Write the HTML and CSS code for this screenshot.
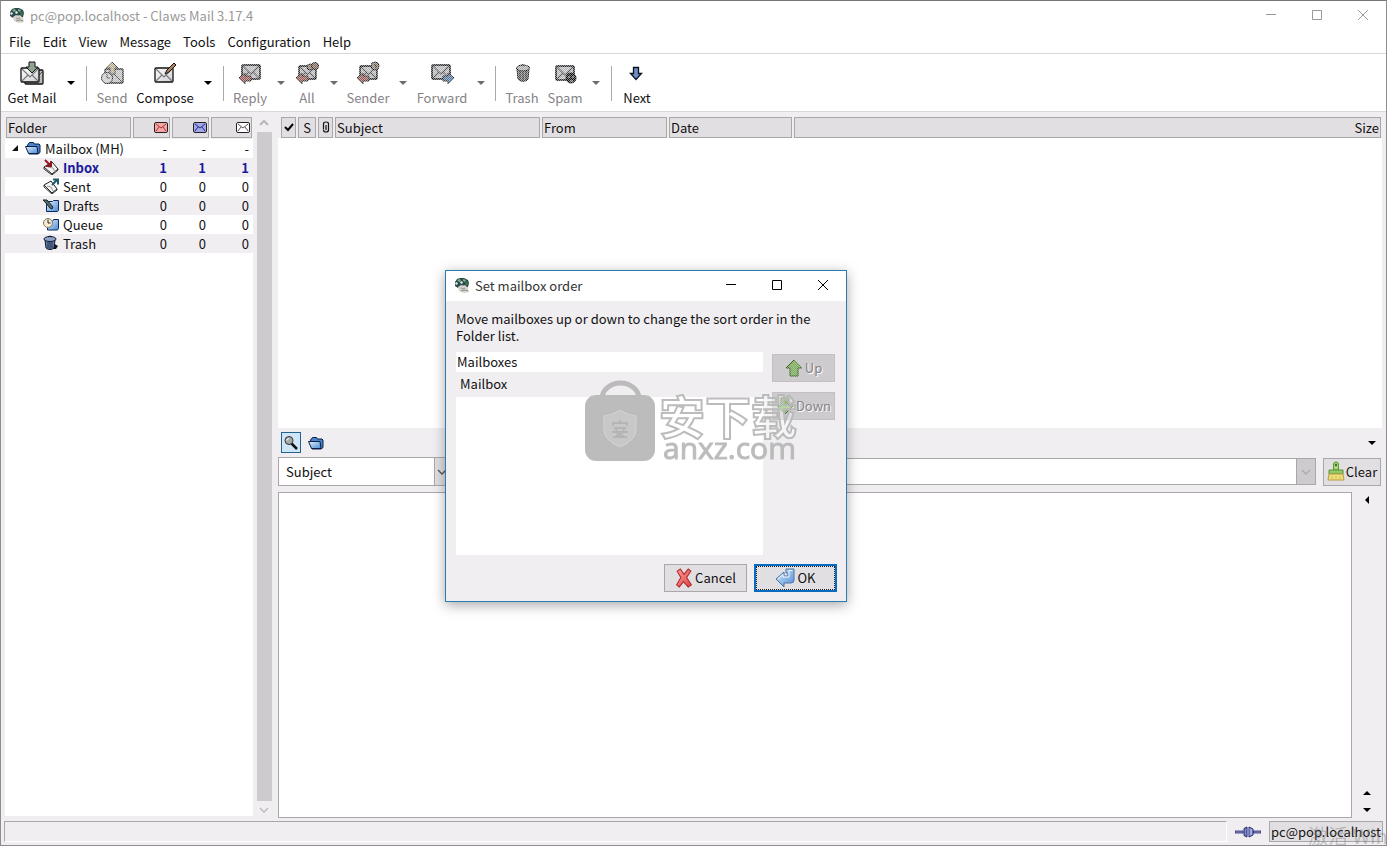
FILE: index.html
```html
<!DOCTYPE html>
<html lang="en">
<head>
<meta charset="utf-8">
<title>pc@pop.localhost - Claws Mail 3.17.4</title>
<link rel="stylesheet" href="styles.css">
</head>
<body>
<svg class="defs" aria-hidden="true">
  <defs>
    <linearGradient id="gBlue" x1="0" y1="0" x2="1" y2="1"><stop offset="0" stop-color="#e2f0fc"/><stop offset="1" stop-color="#4a8ad6"/></linearGradient>
    <linearGradient id="gPaper" x1="0" y1="0" x2="1" y2="1"><stop offset="0" stop-color="#fff"/><stop offset="1" stop-color="#cfcfd6"/></linearGradient>
    <linearGradient id="gRed" x1="0" y1="0" x2="1" y2="1"><stop offset="0" stop-color="#ff9a94"/><stop offset="1" stop-color="#e0454a"/></linearGradient>
  </defs>
  <symbol id="logo" viewBox="0 0 16 16">
    <path d="M1 5l2-3 3-1h4l4 2 1 3-1 4-3 1-2-3-2 2-3 1-3-2z" fill="#2b4a4c"/>
    <path d="M3 3l3-1 1 2-2 1zM9 2l3 1-1 2-2-1z" fill="#7fae8c"/>
    <path d="M1 6l2-1 1 2-2 1zM6 5l2-1 1 2-2 1z" fill="#dfeee6"/>
    <path d="M12 4l2 2-1 3-2-3z" fill="#3f7a46"/>
    <path d="M4 10l3-2 2 1 2-1 3 3 1 4-5 1-5-2z" fill="#d5d3cc"/>
    <path d="M7 11l2 1 2-1M7 14l4-1 3 1" stroke="#8e8f88" fill="none"/>
  </symbol>
  <symbol id="env" viewBox="0 0 20 16">
    <rect x="1" y="1" width="18" height="14" rx="1" fill="url(#gPaper)" stroke="#111" stroke-width="1.3"/>
    <path d="M2 2l8 8 8-8M2 14l6-6M18 14l-6-6" fill="none" stroke="#777" stroke-width="1.1"/>
  </symbol>
  <symbol id="getmail" viewBox="0 0 24 24">
    <rect x="5" y="9" width="18" height="14" rx="1" fill="#bdbdb8" stroke="#111" stroke-width="1.3"/>
    <path d="M13 20l9-9" stroke="#555"/>
    <use href="#env" x="0" y="6" width="20" height="16"/>
    <path d="M9 1h6v5h3l-6 6-6-6h3z" fill="#8fa392" stroke="#111"/>
  </symbol>
  <symbol id="send" viewBox="0 0 24 24">
    <rect x="5" y="8" width="18" height="14" rx="1" fill="#bbb" stroke="#222" stroke-width="1.3"/>
    <path d="M6 21l8-8 8 8" stroke="#555" fill="none"/>
    <circle cx="7" cy="17" r="5.500" fill="#ccc" stroke="#222"/>
    <path d="M7 13v4h3" stroke="#444" fill="none"/>
    <path d="M12 1l6 6h-3v6h-5V7H6z" fill="#b8a98c" stroke="#444"/>
  </symbol>
  <symbol id="compose" viewBox="0 0 24 24">
    <use href="#env" x="1" y="6" width="20" height="16"/>
    <path d="M12 13l2-4 7-7 2 2-7 7z" fill="#b5835a" stroke="#111"/>
  </symbol>
  <symbol id="graymail" viewBox="0 0 20 16">
    <rect x="1" y="1" width="18" height="14" rx="1" fill="#b5b3b8" stroke="#000" stroke-width="1.5"/>
    <path d="M2 2l8 8 8-8M2 14l6-6M18 14l-6-6" fill="none" stroke="#555" stroke-width="1.3"/>
  </symbol>
  <symbol id="reply" viewBox="0 0 24 24">
    <use href="#graymail" x="3" y="3" width="20" height="16"/>
    <path d="M1 17l6-5v3h6v5H7v3z" fill="#94544f" stroke="#222"/>
  </symbol>
  <symbol id="replyall" viewBox="0 0 24 24">
    <use href="#graymail" x="3" y="4" width="19" height="15"/>
    <circle cx="15" cy="6" r="3" fill="#8c7b68" stroke="#111"/><circle cx="20" cy="5" r="3.500" fill="#7f655c" stroke="#111"/>
    <path d="M1 17l6-5v3h6v5H7v3z" fill="#94544f" stroke="#222"/>
  </symbol>
  <symbol id="sender" viewBox="0 0 24 24">
    <use href="#graymail" x="3" y="4" width="19" height="15"/>
    <circle cx="19" cy="5" r="4" fill="#8c7f6e" stroke="#111"/><path d="M18 4h2v3" stroke="#222" fill="none"/>
    <path d="M1 17l6-5v3h6v5H7v3z" fill="#94544f" stroke="#222"/>
  </symbol>
  <symbol id="forward" viewBox="0 0 24 24">
    <use href="#graymail" x="1" y="3" width="20" height="16"/>
    <path d="M24 17l-6-5v3h-5v5h5v3z" fill="#4f739f" stroke="#222"/>
  </symbol>
  <symbol id="bin" viewBox="0 0 24 24">
    <path d="M7 8l1 10c2 3 8 3 10 0l1-10z" fill="#777" stroke="#111"/>
    <path d="M10 10v9M13 11v9M16 10v9" stroke="#222"/>
    <ellipse cx="13" cy="7" rx="6.500" ry="3" fill="#aaa" stroke="#111"/><path d="M11 5q2-3 4 0" stroke="#222" fill="none"/>
  </symbol>
  <symbol id="spam" viewBox="0 0 24 24">
    <use href="#graymail" x="2" y="4" width="20" height="16"/>
    <circle cx="18" cy="17" r="5" fill="#111" stroke="#000"/><path d="M15 16h2M19 16h2M17 20h3" stroke="#bbb"/>
  </symbol>
  <symbol id="next" viewBox="0 0 24 24">
    <path d="M8.500 6.500h5v6h3l-5.500 6-5.500-6h3z" fill="#6d8fc4" stroke="#0a1020" stroke-width="1.300"/>
  </symbol>
  <symbol id="folder" viewBox="0 0 16 14">
    <path d="M2.500 4l2-2.500h4l1 1.500h4.500l1 1v7.500l-2 1.500h-9z" fill="#4a83cc" stroke="#0b1f45"/>
    <path d="M.500 5.500h11.500l1 7H3.500z" fill="url(#gBlue)" stroke="#0b1f45"/>
  </symbol>
  <symbol id="inbox" viewBox="0 0 16 16">
    <path d="M1 8l8-5 6 7-6 5z" fill="#f3f3f3" stroke="#222"/><path d="M1 8v2l8 6 6-5v-1" fill="none" stroke="#333"/>
    <path d="M5 8l5 1 2 4" stroke="#999" fill="none"/>
    <path d="M2 1l5 5M8 2v5H3" stroke="#8f1820" stroke-width="2" fill="none"/>
  </symbol>
  <symbol id="sent" viewBox="0 0 16 16">
    <path d="M1 7l7-4 6 8-5 4z" fill="#f3f3f3" stroke="#222"/><path d="M1 7v2l8 7 5-4v-1" fill="none" stroke="#333"/>
    <path d="M4 8l4 1 2 4" stroke="#999" fill="none"/>
    <path d="M9 7l5-5M10 1.500h5v5" stroke="#1d5a6b" stroke-width="2" fill="none"/>
  </symbol>
  <symbol id="drafts" viewBox="0 0 16 16">
    <path d="M3.500 4.500h6l1-1h5v10l-1 1h-11z" fill="url(#gBlue)" stroke="#0b2b60"/>
    <path d="M0 3l4 0 6 7-1 2-2-1-5-6z" fill="#59696d" stroke="#17262b"/>
  </symbol>
  <symbol id="queue" viewBox="0 0 16 16">
    <path d="M4.500 5.500h5l1-2h5v9l-1 1.500h-10z" fill="url(#gBlue)" stroke="#0b2b60"/>
    <circle cx="5" cy="7" r="4.500" fill="#f4ecd6" stroke="#8a7557"/><path d="M5 3.500V7h2.500" stroke="#222" fill="none"/>
  </symbol>
  <symbol id="trash" viewBox="0 0 16 16">
    <path d="M10 8l5 3-2 3-5 0z" fill="#111"/>
    <path d="M2 5l1 8c2 2 6 2 8 0l1-8z" fill="#6b80a8" stroke="#101a30"/>
    <path d="M5 7v6M7 7v7M9 7v6" stroke="#1c2c50"/>
    <ellipse cx="7" cy="4" rx="6" ry="2.500" fill="#8fa3c6" stroke="#101a30"/><path d="M5 2q2-2 4 0" stroke="#101a30" fill="none"/>
  </symbol>
  <symbol id="minienv" viewBox="0 0 14 11">
    <rect x=".5" y=".5" width="13" height="10" rx="1.500" fill="currentColor" stroke="#222"/>
    <path d="M2 2l5 4 5-4M2 9l3-4M12 9L9 5" fill="none" stroke="var(--flap)"/>
  </symbol>
  <symbol id="lens" viewBox="0 0 16 16">
    <path d="M8 8l6 6" stroke="#111" stroke-width="2.500"/><circle cx="6" cy="5.500" r="4" fill="#a8aca6" stroke="#333"/>
    <path d="M4 5.500q0-2 2-2" stroke="#fff" fill="none"/>
  </symbol>
  <symbol id="brush" viewBox="0 0 18 20">
    <path d="M6.500 9V3q0-2 2.500-2t2.500 2v6z" fill="#a5d67a" stroke="#5d9a3a"/><circle cx="9" cy="4" r="1.200" fill="#3f7324"/>
    <path d="M2 9h14v4H2z" fill="#93c968" stroke="#5b9438"/>
    <path d="M2 13h14l1 6H1z" fill="#efe07c" stroke="#b59c45"/><path d="M5 15v3M9 15v3M13 15v3" stroke="#d3bb58"/>
  </symbol>
  <symbol id="arrowup" viewBox="0 0 18 18">
    <path d="M9 1l8 8h-4v8H5V9H1z" fill="#7db356" stroke="#2f5a1c"/>
  </symbol>
  <symbol id="arrowdown" viewBox="0 0 18 18">
    <path d="M9 17l8-8h-4V1H5v8H1z" fill="#7db356" stroke="#2f5a1c"/>
  </symbol>
  <symbol id="cross" viewBox="0 0 16 19">
    <path d="M1.500 3l3-2 3.500 5 4-5 2.500 2-4 6 4.500 7-3 2-4.500-5-4 5-2.500-2 4-7z" fill="url(#gRed)" stroke="#b02a2c"/>
  </symbol>
  <symbol id="enter" viewBox="0 0 20 20">
    <path d="M1 11l8-7v4h4V5h-2V1h8v11q0 3-3 3H9v4z" fill="url(#gBlue)" stroke="#4a74a8"/>
    <path d="M3 11l5-4.500V9h6V2.500h3.500" fill="none" stroke="#f2f8fe"/>
  </symbol>
  <symbol id="plug" viewBox="0 0 26 12">
    <path d="M0 5h8v2H0zM18 5h8v2h-8z" fill="#8b90cc" stroke="#23286b" stroke-width=".8"/>
    <path d="M9 2.500l3-1.500v10l-3-1.500z" fill="#8088e0" stroke="#1e2466"/><path d="M14 1l4 2v6l-4 2z" fill="#a3aaf0" stroke="#1e2466"/>
  </symbol>
  <symbol id="clip" viewBox="0 0 8 12">
    <path d="M1.500 8.500V3q0-2 2.500-2t2.500 2v6q0 2-2.500 2T1.500 9M4 4v5" fill="none" stroke="#111" stroke-width="1.200"/>
  </symbol>
  <symbol id="tick" viewBox="0 0 10 10"><path d="M1 5l3 3 5-6" fill="none" stroke="#000" stroke-width="2"/></symbol>
  <symbol id="min" viewBox="0 0 12 12"><path d="M1 5.500h10" stroke="currentColor"/></symbol>
  <symbol id="max" viewBox="0 0 12 12"><path d="M1.500 1.500h9v9h-9z" fill="none" stroke="currentColor"/></symbol>
  <symbol id="close" viewBox="0 0 12 12"><path d="M1 1l10 10M11 1L1 11" stroke="currentColor"/></symbol>
  <symbol id="chevdown" viewBox="0 0 10 8"><path d="M1 2l4 4 4-4" fill="none" stroke="currentColor" stroke-width="1.300"/></symbol>
  <symbol id="chevup" viewBox="0 0 10 8"><path d="M1 6l4-4 4 4" fill="none" stroke="currentColor" stroke-width="2"/></symbol>
</svg>

<div class="window">
  <header class="titlebar">
    <svg class="i16"><use href="#logo"/></svg>
    <span class="caption">pc@pop.localhost - Claws Mail 3.17.4</span>
    <div class="winbtns">
      <button aria-label="Minimize"><svg><use href="#min"/></svg></button>
      <button aria-label="Maximize"><svg><use href="#max"/></svg></button>
      <button aria-label="Close"><svg><use href="#close"/></svg></button>
    </div>
  </header>
  <nav class="menubar">
    <button>File</button><button>Edit</button><button>View</button><button>Message</button><button>Tools</button><button>Configuration</button><button>Help</button>
  </nav>
  <div class="toolbar">
    <button class="tool"><svg><use href="#getmail"/></svg>Get Mail</button>
    <button class="drop" aria-label="Get Mail options"></button>
    <i class="sep"></i>
    <button class="tool" disabled><svg><use href="#send"/></svg>Send</button>
    <button class="tool"><svg><use href="#compose"/></svg>Compose</button>
    <button class="drop" aria-label="Compose options"></button>
    <i class="sep"></i>
    <button class="tool" disabled><svg><use href="#reply"/></svg>Reply</button>
    <button class="drop" disabled aria-label="Reply options"></button>
    <button class="tool" disabled><svg><use href="#replyall"/></svg>All</button>
    <button class="drop" disabled aria-label="All options"></button>
    <button class="tool" disabled><svg><use href="#sender"/></svg>Sender</button>
    <button class="drop" disabled aria-label="Sender options"></button>
    <button class="tool" disabled><svg><use href="#forward"/></svg>Forward</button>
    <button class="drop" disabled aria-label="Forward options"></button>
    <i class="sep"></i>
    <button class="tool" disabled><svg><use href="#bin"/></svg>Trash</button>
    <button class="tool" disabled><svg><use href="#spam"/></svg>Spam</button>
    <button class="drop" disabled aria-label="Spam options"></button>
    <i class="sep"></i>
    <button class="tool"><svg><use href="#next"/></svg>Next</button>
  </div>

  <main class="main">
    <aside class="folders">
      <div class="tree">
        <table class="grid">
          <colgroup><col><col class="c-num"><col class="c-num"><col class="c-last"></colgroup>
          <thead><tr>
            <th><div class="hd">Folder</div></th>
            <th><div class="hd end"><svg class="mini new"><use href="#minienv"/></svg></div></th>
            <th><div class="hd end"><svg class="mini unread"><use href="#minienv"/></svg></div></th>
            <th><div class="hd end"><svg class="mini total"><use href="#minienv"/></svg></div></th>
          </tr></thead>
          <tbody>
            <tr><td><div class="name root"><i class="expander"></i><svg class="i16"><use href="#folder"/></svg>Mailbox (MH)</div></td><td>-</td><td>-</td><td>-</td></tr>
            <tr class="unreadrow"><td><div class="name"><svg class="i16"><use href="#inbox"/></svg>Inbox</div></td><td>1</td><td>1</td><td>1</td></tr>
            <tr><td><div class="name"><svg class="i16"><use href="#sent"/></svg>Sent</div></td><td>0</td><td>0</td><td>0</td></tr>
            <tr><td><div class="name"><svg class="i16"><use href="#drafts"/></svg>Drafts</div></td><td>0</td><td>0</td><td>0</td></tr>
            <tr><td><div class="name"><svg class="i16"><use href="#queue"/></svg>Queue</div></td><td>0</td><td>0</td><td>0</td></tr>
            <tr><td><div class="name"><svg class="i16"><use href="#trash"/></svg>Trash</div></td><td>0</td><td>0</td><td>0</td></tr>
          </tbody>
        </table>
      </div>
      <div class="scroll">
        <svg><use href="#chevup"/></svg><div class="thumb"></div><svg><use href="#chevdown"/></svg>
      </div>
    </aside>

    <section class="content">
      <div class="msglist">
        <table class="grid">
          <colgroup><col class="m-mark"><col class="m-s"><col class="m-clip"><col class="m-subject"><col class="m-from"><col class="m-date"><col></colgroup>
          <thead><tr>
            <th><div class="hd mid"><svg class="tick"><use href="#tick"/></svg></div></th>
            <th><div class="hd mid">S</div></th>
            <th><div class="hd mid"><svg class="clip"><use href="#clip"/></svg></div></th>
            <th><div class="hd">Subject</div></th>
            <th><div class="hd">From</div></th>
            <th><div class="hd">Date</div></th>
            <th><div class="hd end">Size</div></th>
          </tr></thead>
        </table>
      </div>
      <div class="quick">
        <button class="toggle on" aria-label="Quick search"><svg class="i16"><use href="#lens"/></svg></button>
        <button class="toggle" aria-label="Folder"><svg class="i16"><use href="#folder"/></svg></button>
        <i class="tri down"></i>
      </div>
      <div class="search">
        <div class="combo kind"><select aria-label="Search in"><option>Subject</option></select><span class="arrow"><svg><use href="#chevdown"/></svg></span></div>
        <div class="combo term"><input type="text" aria-label="Search text"><button class="arrow off" disabled aria-label="Search history"><svg><use href="#chevdown"/></svg></button></div>
        <button class="btn clear"><svg><use href="#brush"/></svg>Clear</button>
      </div>
      <div class="message">
        <div class="view"></div>
        <div class="side"><i class="tri left"></i><i class="tri up"></i><i class="tri down"></i></div>
      </div>
    </section>
  </main>

  <footer class="status">
    <div class="log"></div>
    <svg class="plug"><use href="#plug"/></svg>
    <button class="account">pc@pop.localhost</button>
    <span class="activate" lang="zh">激活 Win</span>
  </footer>
</div>

<div class="dialog" role="dialog" aria-labelledby="dlgtitle">
  <header class="dlgbar">
    <svg class="i16"><use href="#logo"/></svg>
    <span class="caption" id="dlgtitle">Set mailbox order</span>
    <div class="winbtns">
      <button aria-label="Minimize"><svg><use href="#min"/></svg></button>
      <button aria-label="Maximize"><svg><use href="#max"/></svg></button>
      <button aria-label="Close"><svg><use href="#close"/></svg></button>
    </div>
  </header>
  <div class="dlgbody">
    <p>Move mailboxes up or down to change the sort order in the Folder list.</p>
    <div class="order">
      <div class="boxes">
        <div class="group">Mailboxes</div>
        <div class="colname">Mailbox</div>
        <div class="list"></div>
      </div>
      <div class="updown">
        <button class="btn" disabled><svg><use href="#arrowup"/></svg>Up</button>
        <button class="btn" disabled><svg><use href="#arrowdown"/></svg>Down</button>
      </div>
    </div>
    <div class="actions">
      <button class="btn"><svg><use href="#cross"/></svg>Cancel</button>
      <button class="btn default"><svg><use href="#enter"/></svg>OK</button>
    </div>
  </div>
  <div class="mark">
    <svg class="bag" viewBox="0 0 70 80">
      <path d="M17 17a18.500 16 0 0 1 37 0" fill="none" stroke="#b9b9b9" stroke-width="5"/>
      <rect x="0" y="13" width="70" height="66" rx="11" fill="#b9b9b9"/>
      <path d="M35 28q7 5 16 6v14q0 10-16 17-16-7-16-17V34q9-1 16-6z" fill="#c6c6c6" stroke="#d2d2d2"/>
      <path d="M35 38v3M28 44v-3h14v3M29 46h12M27 50h16M31 46q0 8 8 8M39 46q0 6-8 8M28 55h14" fill="none" stroke="#b2b2b2" stroke-width="2"/>
    </svg>
    <div class="words"><span class="zh" lang="zh">安下载</span><span class="url">anxz.com</span></div>
  </div>
</div>
</body>
</html>
```

FILE: styles.css
```css
:root {
  --bg: #f0eef1;
  --head: #e2dfe3;
  --line: #a9a7aa;
}
* { box-sizing: border-box; }
body {
  margin: 0;
  font: 13px/17px "Noto Sans CJK SC", "Noto Sans", sans-serif;
  color: #111;
  position: relative;
}
button, input, select {
  font: inherit;
  color: inherit;
  margin: 0;
  padding: 0;
  border: 0;
  background: none;
  border-radius: 0;
}
svg { display: block; flex: none; }
.defs { position: absolute; width: 0; height: 0; }
.i16 { width: 16px; height: 16px; }

.window {
  height: 100vh;
  display: flex;
  flex-direction: column;
  background: var(--bg);
  border: 1px solid #8e8c8f;
  border-top-color: #77757a;
}
.titlebar {
  flex: none;
  display: flex;
  align-items: center;
  height: 29px;
  padding: 0 0 1px 8px;
  gap: 5px;
  background: #fff;
  color: #999;
}
.caption { flex: 1; }
.winbtns { display: flex; }
.winbtns button {
  width: 46px;
  height: 28px;
  display: grid;
  place-items: center;
}
.winbtns svg { width: 12px; height: 12px; }
.menubar {
  flex: none;
  display: flex;
  height: 24px;
  padding-left: 8px;
  gap: 12px;
  background: #fff;
  border-bottom: 1px solid #d9d7da;
}
.toolbar {
  flex: none;
  display: grid;
  grid-template-columns: 56px 22px 9px 42px 64px 22px 8px 46px 15px 38px 15px 54px 16px 62px 16px 12px 42px 44px 18px 12px 40px;
  height: 58px;
  padding: 7px 0 3px 3px;
  background: #fff;
  border-bottom: 1px solid #d9d7da;
}
.tool {
  display: flex;
  flex-direction: column;
  align-items: center;
  gap: 4px;
  white-space: nowrap;
}
.tool svg { width: 24px; height: 24px; }
.tool:disabled { color: #858386; }
.tool:disabled svg, .btn:disabled svg {
  -webkit-mask: repeating-conic-gradient(#000 0 25%, rgba(0, 0, 0, .5) 0 50%) 0 0 / 2px 2px;
  mask: repeating-conic-gradient(#000 0 25%, rgba(0, 0, 0, .5) 0 50%) 0 0 / 2px 2px;
}
.drop { display: grid; place-items: center; padding-bottom: 3px; }
.drop::before {
  content: "";
  border: 4px solid transparent;
  border-top-color: #000;
  border-bottom: 0;
}
.drop:disabled::before { border-top-color: #6d6b6e; }
.sep {
  justify-self: center;
  width: 1px;
  height: 35px;
  margin-top: 5px;
  background: #aaa8ab;
}

.main { flex: 1; min-height: 0; display: flex; padding: 4px 4px 2px; gap: 6px; }
.folders { flex: none; width: 267px; display: flex; gap: 3px; }
.tree { flex: 1; background: #fff; margin-bottom: 2px; }
.grid { width: 100%; table-layout: fixed; border-collapse: collapse; }
.grid th { padding: 1px 1px 0; background: var(--bg); font-weight: normal; text-align: left; }
.tree .grid th { padding-bottom: 1px; }
.grid td { height: 19px; padding: 0 4px 1px 0; text-align: right; white-space: nowrap; }
.grid td:first-child { text-align: left; }
.grid tbody tr:nth-child(even) { background: var(--bg); }
.c-num { width: 39px; }
.c-last { width: 43px; }
.hd {
  display: flex;
  align-items: center;
  height: 21px;
  padding: 0 1px 1px;
  background: var(--head);
  border: 1px solid var(--line);
}
.hd.mid { justify-content: center; }
.hd.end { justify-content: flex-end; }
.mini { width: 14px; height: 11px; }
.new { color: #f4a7a4; --flap: #a33; }
.unread { color: #a3a8ea; --flap: #22277a; }
.total { color: #fff; --flap: #555; }
.name { display: flex; align-items: center; gap: 4px; padding-left: 38px; }
.name.root { padding-left: 7px; }
.expander {
  margin-right: 3px;
  border: 3px solid #111;
  border-top-color: transparent;
  border-left-color: transparent;
}
.unreadrow { font-weight: bold; color: #1a1a9c; }
.scroll {
  width: 16px;
  display: flex;
  flex-direction: column;
  align-items: center;
  gap: 5px;
  padding: 3px 0 4px;
  color: #b9b7ba;
}
.scroll svg { width: 10px; height: 8px; }
.thumb { flex: 1; width: 15px; background: #cdcbce; }

.content { flex: 1; min-width: 0; display: flex; flex-direction: column; }
.msglist { height: 312px; background: #fff; }
.msglist .grid th:first-child { padding-left: 3px; }
.m-mark { width: 19px; }
.m-s { width: 20px; }
.m-clip { width: 17px; }
.m-subject { width: 207px; }
.m-from { width: 127px; }
.m-date { width: 125px; }
.tick { width: 10px; height: 10px; }
.clip { width: 8px; height: 12px; }
.quick { display: flex; align-items: center; gap: 5px; padding: 4px 6px 4px 3px; }
.toggle { width: 20px; height: 21px; display: grid; place-items: center; }
.toggle.on { background: #cfe6f8; border: 1px solid #24628f; }
.tri { border: 4px solid transparent; }
.tri.down { border-top-color: #000; border-bottom: 0; }
.tri.up { border-bottom-color: #000; border-top: 0; }
.tri.left { border-right-color: #000; border-left: 0; }
.quick .tri { margin-left: auto; }
.search { display: flex; align-items: center; height: 29px; padding-right: 1px; }
.combo { display: flex; height: 29px; background: #fff; border: 1px solid var(--line); }
.kind { width: 176px; }
.kind select { flex: 1; appearance: none; padding-left: 7px; }
.term { flex: 1; height: 27px; margin: 0 7px 0 6px; }
.term input { flex: 1; min-width: 0; outline: 0; }
.arrow {
  width: 19px;
  display: grid;
  place-items: center;
  background: var(--head);
  border-left: 1px solid var(--line);
}
.arrow svg { width: 10px; height: 8px; color: #555; }
.kind .arrow { justify-items: start; padding-left: 2px; }
.arrow.off { background: #cdcbce; }
.arrow.off svg { color: #aaa; }
.btn {
  display: flex;
  align-items: center;
  justify-content: center;
  gap: 3px;
  height: 28px;
  padding-bottom: 1px;
  background: var(--head);
  border: 1px solid var(--line);
}
.btn:disabled { background: #cdcbce; border-color: #c2c0c3; color: #858386; text-shadow: 1px 1px #fff; }
.btn svg { width: 18px; height: 20px; }
.clear { width: 58px; gap: 1px; }
.message { flex: 1; display: flex; margin-top: 6px; }
.view { flex: 1; background: #fff; border: 1px solid var(--line); }
.side {
  width: 30px;
  display: flex;
  flex-direction: column;
  align-items: center;
  gap: 13px;
  padding: 4px 0 6px;
}
.side .left { margin-bottom: auto; }

.status {
  flex: none;
  position: relative;
  display: flex;
  align-items: center;
  height: 25px;
  padding: 0 3px 2px;
  gap: 8px;
  overflow: hidden;
}
.log { flex: 1; height: 21px; border: 1px solid #fff; border-top-color: var(--line); border-left-color: var(--line); }
.plug { width: 26px; height: 12px; }
.account { padding: 0 1px; height: 21px; background: var(--head); border: 1px solid var(--line); }
.activate {
  position: absolute;
  left: calc(100% - 78px);
  top: 6px;
  font-size: 20px;
  line-height: 20px;
  white-space: nowrap;
  color: rgba(120, 120, 120, .4);
}

.dialog {
  position: absolute;
  left: 445px;
  top: 270px;
  width: 402px;
  background: var(--bg);
  border: 1px solid #2b7ab0;
  box-shadow: 0 3px 12px rgba(0, 0, 0, .35);
}
.dlgbar {
  display: flex;
  align-items: center;
  gap: 5px;
  height: 30px;
  padding: 0 0 2px 8px;
  background: #fff;
  color: #333;
}
.dlgbar button { color: #000; }
.dlgbody { padding: 9px 9px 9px 10px; }
.dlgbody p { margin: 0 20px 8px 0; }
.order { display: flex; gap: 9px; }
.boxes { flex: 1; }
.group { height: 20px; padding: 1px; background: #fff; }
.colname { height: 25px; padding: 3px 4px; }
.list { height: 158px; background: #fff; }
.updown { width: 65px; display: flex; flex-direction: column; gap: 10px; padding: 2px 2px 0 0; }
.updown svg { width: 18px; height: 18px; }
.updown .btn { gap: 2px; }
.actions { display: flex; justify-content: flex-end; gap: 7px; margin-top: 9px; }
.actions .btn { width: 83px; gap: 2px; }
.actions .default { border: 2px solid #0a6cc0; outline: 1px dotted #222; outline-offset: -3px; }
.default svg { width: 20px; }
.mark {
  position: absolute;
  left: 139px;
  top: 111px;
  display: flex;
  gap: 4px;
  opacity: .95;
  pointer-events: none;
}
.bag { width: 70px; height: 80px; overflow: visible; }
.words { display: flex; flex-direction: column; white-space: nowrap; }
.zh {
  margin-top: 9px;
  font: bold 46px/46px "Noto Sans CJK SC", sans-serif;
  color: rgba(255, 255, 255, .4);
  -webkit-text-stroke: 2px #b9b9b9;
}
.url { padding-left: 4px; font: 30px/22px "Open Sans", sans-serif; color: #b9b9b9; -webkit-text-stroke: 1px #b9b9b9; }
```
